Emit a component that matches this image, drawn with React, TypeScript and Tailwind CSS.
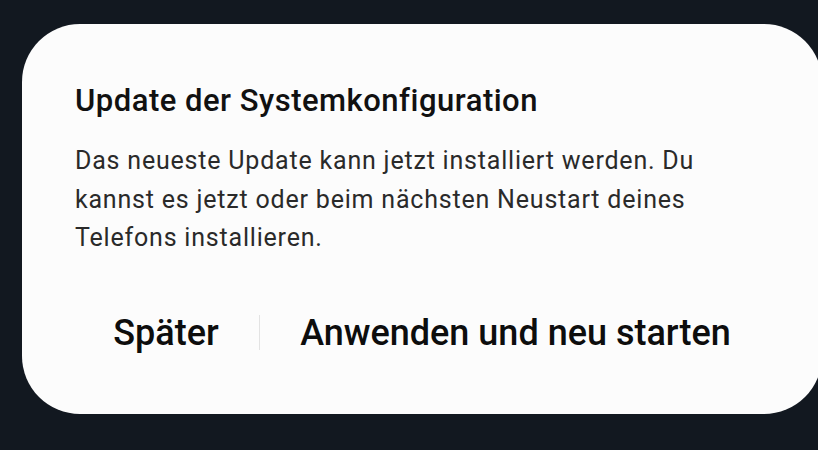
export default function App() {
  return (
    <div className="w-[818px] h-[450px] overflow-hidden bg-[#121820] pt-[24px] pl-[22px]" style={{ fontFamily: "Roboto, 'Noto Sans', sans-serif" }}>
      <div className="w-[800px] h-[390px] rounded-[58px] bg-[#fcfcfc] flex flex-col">
        <div className="pl-[53px] pr-[40px] pt-[59px]">
          <h1 className="text-[31px] leading-[36px] font-medium text-[#111111] tracking-[0.5px]">Update der Systemkonfiguration</h1>
          <p className="mt-[23px] text-[25px] leading-[38.5px] text-[#2a2a2a] tracking-[0.8px] w-[660px]">
            Das neueste Update kann jetzt installiert werden. Du kannst es jetzt oder beim nächsten Neustart deines Telefons installieren.
          </p>
        </div>
        <div className="mt-[53px] flex items-center justify-center gap-[40px] text-[#0d0d0d]">
          <span className="text-[36px] leading-[44px] font-medium">Später</span>
          <span className="w-[1.5px] h-[35px] bg-[#e3e3e3]"></span>
          <span className="text-[36px] leading-[44px] font-medium">Anwenden und neu starten</span>
        </div>
      </div>
    </div>
  );
}
